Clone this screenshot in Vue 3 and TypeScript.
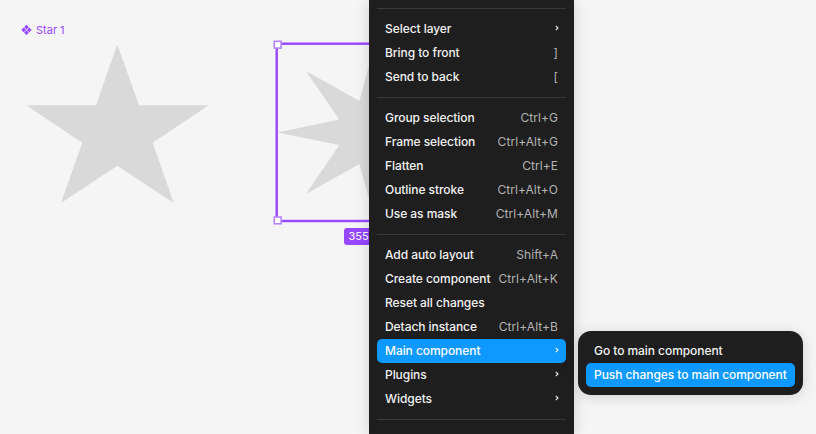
<script setup lang="ts">
interface Item { label: string; hint?: string; arrow?: boolean; active?: boolean }

const groups: Item[][] = [
  [
    { label: 'Select layer', arrow: true },
    { label: 'Bring to front', hint: ']' },
    { label: 'Send to back', hint: '[' },
  ],
  [
    { label: 'Group selection', hint: 'Ctrl+G' },
    { label: 'Frame selection', hint: 'Ctrl+Alt+G' },
    { label: 'Flatten', hint: 'Ctrl+E' },
    { label: 'Outline stroke', hint: 'Ctrl+Alt+O' },
    { label: 'Use as mask', hint: 'Ctrl+Alt+M' },
  ],
  [
    { label: 'Add auto layout', hint: 'Shift+A' },
    { label: 'Create component', hint: 'Ctrl+Alt+K' },
    { label: 'Reset all changes' },
    { label: 'Detach instance', hint: 'Ctrl+Alt+B' },
    { label: 'Main component', arrow: true, active: true },
    { label: 'Plugins', arrow: true },
    { label: 'Widgets', arrow: true },
  ],
]

const star5 = '117.3,44.5 139,105.3 208.7,105.3 152.7,142.7 173.7,203 117.3,165.7 61,203 82.3,142.7 26.3,105.3 96,105.3'
const star8 = '277.5,132.5 339.3,119.5 306,71 359.4,101 375,44 390.6,101 444,71 410.7,119.5 472.5,132.5 410.7,145 444,194 390.6,164 375,220 359.4,164 306,194 339.3,145'
const handles: [number, number][] = [[274.3, 41.3], [274.3, 217], [469, 41.3], [469, 217]]
</script>

<template>
  <div class="page">
    <svg class="canvas" width="816" height="434" viewBox="0 0 816 434">
      <polygon :points="star5" fill="#d9d9d9" />
      <polygon :points="star8" fill="#d9d9d9" />
      <rect x="276.7" y="43.7" width="197" height="177.3" fill="none" stroke="#9747ff" stroke-width="2.4" />
      <rect
        v-for="(h, i) in handles"
        :key="i"
        :x="h[0]"
        :y="h[1]"
        width="6.8"
        height="6.8"
        fill="#fff"
        stroke="#b583ff"
        stroke-width="1.6"
      />
      <g fill="#9747ff">
        <rect x="24.8" y="25.4" width="3.4" height="3.4" transform="rotate(45 26.5 27.1)" />
        <rect x="24.8" y="31" width="3.4" height="3.4" transform="rotate(45 26.5 32.7)" />
        <rect x="22" y="28.2" width="3.4" height="3.4" transform="rotate(45 23.7 29.9)" />
        <rect x="27.6" y="28.2" width="3.4" height="3.4" transform="rotate(45 29.3 29.9)" />
      </g>
    </svg>

    <span class="name">Star 1</span>
    <span class="size">355 x 355</span>

    <div class="menu">
      <template v-for="(group, g) in groups" :key="g">
        <div class="sep"></div>
        <div class="group">
          <div v-for="item in group" :key="item.label" class="row" :class="{ on: item.active }">
            <span class="label">{{ item.label }}</span>
            <span v-if="item.hint" class="hint">{{ item.hint }}</span>
            <svg v-if="item.arrow" class="chev" width="4" height="6" viewBox="0 0 4 6">
              <path d="M0.8 0.8 L3 3 L0.8 5.2" fill="none" stroke="currentColor" stroke-width="1.1" />
            </svg>
          </div>
        </div>
      </template>
      <div class="sep"></div>
    </div>

    <div class="submenu">
      <div class="row">Go to main component</div>
      <div class="row on">Push changes to main component</div>
    </div>
  </div>
</template>

<style scoped>
.page {
  position: relative;
  width: 816px;
  height: 434px;
  overflow: hidden;
  background: #f5f5f5;
  font-family: Inter, "Noto Sans", sans-serif;
  opacity: 0.999;
}
.canvas {
  position: absolute;
  left: 0;
  top: 0;
}
.name {
  position: absolute;
  left: 36px;
  top: 23px;
  font-size: 11px;
  line-height: 14px;
  color: #9747ff;
}
.size {
  position: absolute;
  left: 343.5px;
  top: 227.5px;
  height: 17px;
  padding: 0 5px;
  border-radius: 3px;
  background: #9747ff;
  color: #fff;
  font-size: 11px;
  line-height: 17px;
  white-space: nowrap;
}
.menu {
  position: absolute;
  left: 369px;
  top: 0;
  width: 205px;
  height: 434px;
  padding: 8px 8px 0;
  box-sizing: border-box;
  background: #1e1e1e;
  box-shadow: 0 2px 14px rgba(0, 0, 0, 0.15);
}
.sep {
  height: 1px;
  background: #383838;
}
.group {
  padding: 8px 0;
}
.row {
  display: flex;
  align-items: center;
  justify-content: space-between;
  box-sizing: border-box;
  height: 24px;
  padding: 0 8px 2px;
  border-radius: 5px;
  color: #f2f2f2;
  font-size: 12px;
  font-weight: 500;
  letter-spacing: -0.06px;
  white-space: nowrap;
}
.row.on {
  background: #0d99ff;
  color: #fff;
}
.hint {
  color: #b3b3b3;
  font-weight: 400;
  letter-spacing: 0.06px;
}
.chev {
  margin-right: -1px;
  color: #f2f2f2;
}
.submenu {
  position: absolute;
  left: 578px;
  top: 331px;
  width: 225px;
  box-sizing: border-box;
  padding: 8px;
  border-radius: 13px;
  background: #1e1e1e;
  box-shadow: 0 2px 14px rgba(0, 0, 0, 0.15);
}
</style>
